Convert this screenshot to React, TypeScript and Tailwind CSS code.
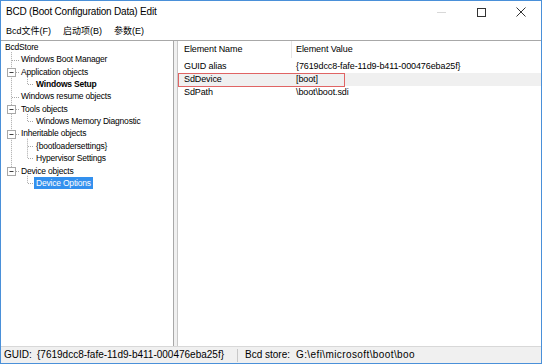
import React from "react";

const treeRows: { label: string; level: number; bold?: boolean; selected?: boolean }[] = [
  { label: "BcdStore", level: 0 },
  { label: "Windows Boot Manager", level: 1 },
  { label: "Application objects", level: 1 },
  { label: "Windows Setup", level: 2, bold: true },
  { label: "Windows resume objects", level: 1 },
  { label: "Tools objects", level: 1 },
  { label: "Windows Memory Diagnostic", level: 2 },
  { label: "Inheritable objects", level: 1 },
  { label: "{bootloadersettings}", level: 2 },
  { label: "Hypervisor Settings", level: 2 },
  { label: "Device objects", level: 1 },
  { label: "Device Options", level: 2, selected: true },
];

const RH = 12.36;
const cy = (i: number) => RH * i + RH / 2;

function TreeLines() {
  const expandRows = [2, 5, 7, 10];
  const level1 = [1, 2, 4, 5, 7, 10];
  const groups: [number, number[]][] = [
    [2, [3]],
    [5, [6]],
    [7, [8, 9]],
    [10, [11]],
  ];
  const dot = { stroke: "#a8a8a8", strokeWidth: 1, strokeDasharray: "1 1" };
  return (
    <svg className="absolute left-0 top-0" width="174" height="200">
      <line x1="10.5" y1={cy(0) + 5} x2="10.5" y2={cy(10)} {...dot} />
      {level1.map((r) => (
        <line key={r} x1="11" y1={Math.round(cy(r)) + 0.5} x2="18" y2={Math.round(cy(r)) + 0.5} {...dot} />
      ))}
      {groups.map(([p, kids]) => (
        <g key={p}>
          <line x1="26.5" y1={cy(p) + 5} x2="26.5" y2={cy(kids[kids.length - 1])} {...dot} />
          {kids.map((k) => (
            <line key={k} x1="27" y1={Math.round(cy(k)) + 0.5} x2="33" y2={Math.round(cy(k)) + 0.5} {...dot} />
          ))}
        </g>
      ))}
      {expandRows.map((r) => {
        const y = Math.round(cy(r)) - 4;
        return (
          <g key={r}>
            <rect x="6.5" y={y + 0.5} width="8" height="8" fill="#fff" stroke="#a8a8a8" strokeWidth="1" />
            <line x1="8.5" y1={y + 4.5} x2="12.5" y2={y + 4.5} stroke="#404040" strokeWidth="1" />
          </g>
        );
      })}
    </svg>
  );
}

export default function App() {
  return (
    <div className="w-[542px] h-[364px] flex flex-col bg-white border border-[#4a90d9] overflow-hidden font-['Liberation_Sans','Noto_Sans_CJK_SC',sans-serif] text-black">
      {/* Title bar */}
      <div className="h-[22px] flex items-center shrink-0">
        <div className="pl-[5px] text-[10px] tracking-[-0.2px] flex-1 leading-none">BCD (Boot Configuration Data) Edit</div>
        <div className="flex items-center h-full">
          <div className="w-[40px] h-full flex items-center justify-center">
            <div className="w-[9px] h-px bg-[#d8d8d8]" />
          </div>
          <div className="w-[40px] h-full flex items-center justify-center">
            <div className="w-[9px] h-[9px] border border-[#333]" />
          </div>
          <div className="w-[40px] h-full flex items-center justify-center">
            <svg width="10" height="10" viewBox="0 0 10 10">
              <path d="M0.5 0.5 L9.5 9.5 M9.5 0.5 L0.5 9.5" stroke="#333" strokeWidth="1" />
            </svg>
          </div>
        </div>
      </div>
      {/* Menu bar */}
      <div className="h-[17px] flex items-center gap-[12px] pl-[5px] text-[9px] shrink-0 leading-none">
        <span>Bcd文件(F)</span>
        <span>启动项(B)</span>
        <span>参数(E)</span>
      </div>
      {/* Main */}
      <div className="flex-1 flex border-t border-[#a8a8a8] bg-[#f0f0f0] min-h-0">
        <div className="w-[173px] bg-white border-r border-[#a8a8a8] relative text-[8.5px] tracking-[-0.2px] leading-none">
          <TreeLines />
          <div className="relative flex flex-col">
            {treeRows.map((r, i) => (
              <div
                key={i}
                className={`h-[12.36px] flex items-center ${r.level === 0 ? "pl-[4px]" : r.level === 1 ? "pl-[20px]" : "pl-[33px]"}`}
              >
                <span
                  className={`${r.bold ? "font-bold" : ""} ${r.selected ? "bg-[#3390ee] text-white" : ""} ${r.level === 2 ? "px-[2px]" : ""} h-[12px] flex items-center whitespace-nowrap`}
                >
                  {r.label}
                </span>
              </div>
            ))}
          </div>
        </div>
        <div className="w-[3px]" />
        <div className="flex-1 bg-white border-l border-[#c8c8c8] relative text-[9px] tracking-[-0.1px] leading-none">
          <div className="h-[17px] flex">
            <div className="w-[114px] pl-[6px] flex items-center border-r border-[#e5e5e5]">Element Name</div>
            <div className="flex-1 pl-[4px] flex items-center">Element Value</div>
          </div>
          <div className="flex flex-col pt-[2px]">
            {[
              ["GUID alias", "{7619dcc8-fafe-11d9-b411-000476eba25f}", false],
              ["SdDevice", "[boot]", true],
              ["SdPath", "\\boot\\boot.sdi", false],
            ].map(([a, b, hl], i) => (
              <div key={i} className={`h-[13px] flex items-center ${hl ? "bg-[#f0f0f0]" : ""}`}>
                <div className="w-[114px] pl-[6px]">{a as string}</div>
                <div className="flex-1 pl-[4px] whitespace-nowrap">{b as string}</div>
              </div>
            ))}
          </div>
          <div className="absolute left-0 top-[32px] w-[167px] h-[14px] border border-[#e06464]" />
        </div>
      </div>
      {/* Status bar */}
      <div className="h-[17px] flex items-center bg-[#f0f0f0] border-t border-[#d8d8d8] text-[10px] leading-none shrink-0 whitespace-nowrap">
        <div className="w-[236px] pl-[3px] flex">
          <span className="w-[33px]">GUID:</span>
          <span>{"{7619dcc8-fafe-11d9-b411-000476eba25f}"}</span>
        </div>
        <div className="w-px h-[13px] bg-[#c8c8c8]" />
        <div className="pl-[7px] flex overflow-hidden">
          <span className="w-[51px]">Bcd store:</span>
          <span className="tracking-[0.4px]">{"G:\\efi\\microsoft\\boot\\boo"}</span>
        </div>
      </div>
    </div>
  );
}
